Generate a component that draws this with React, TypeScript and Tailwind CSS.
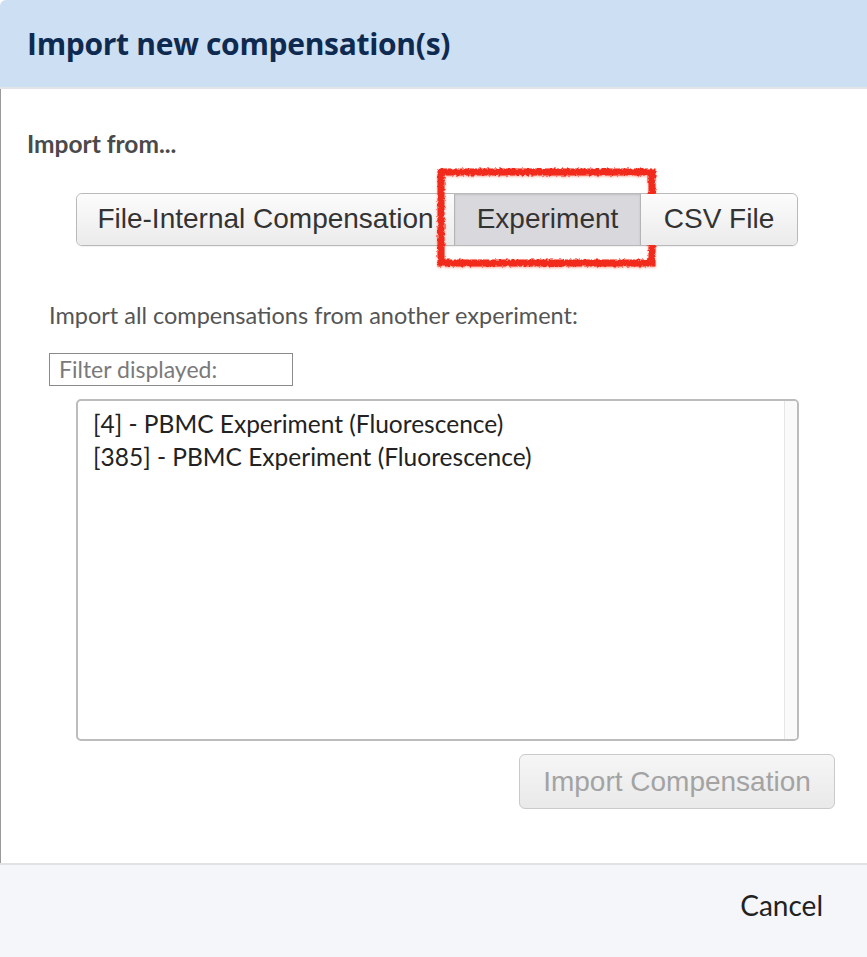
import { useState } from "react";

const experiments = [
  "[4] - PBMC Experiment (Fluorescence)",
  "[385] - PBMC Experiment (Fluorescence)",
];

const sources = [
  { label: "File-Internal Compensation", width: "w-[377px] rounded-l-[6px]" },
  { label: "Experiment", width: "w-[187px] border-x border-[#b4b4b4]" },
  { label: "CSV File", width: "w-[156px] rounded-r-[6px]" },
] as const;

export default function App() {
  const [source, setSource] = useState("Experiment");
  const [filter, setFilter] = useState("");

  const shown = experiments.filter((e) => e.toLowerCase().includes(filter.toLowerCase()));

  return (
    <div className="flex h-[957px] w-[867px] flex-col overflow-hidden bg-white font-['Lato',sans-serif]">
      <header className="flex h-[89px] flex-none items-center rounded-tl-[6px] border-b-2 border-[#e2e4e8] bg-[#cddff2] px-[27px]">
        <h1 className="font-['Open_Sans',sans-serif] text-[30px] font-bold tracking-[-0.01em] text-[#0f2a50]">
          Import new compensation(s)
        </h1>
      </header>

      <main className="flex flex-1 flex-col border-l border-[#9a9a9a]">
        <div className="px-[26px] pt-[37px] text-[24.5px] font-bold text-[#4a4a4a]">Import from...</div>

        <div className="flex pl-[75px] pt-[30px]">
          <div className="flex h-[53px] rounded-[6px] border border-[#b9b9b9] font-['Liberation_Sans',Arial,sans-serif] text-[28px] text-[#333] shadow-[0_1px_1px_rgba(0,0,0,.06)]">
            {sources.map((s) => (
              <button
                key={s.label}
                onClick={() => setSource(s.label)}
                className={
                  (source === s.label
                    ? "bg-[#d9d8dc] shadow-[inset_0_1px_2px_rgba(0,0,0,.12)] "
                    : "bg-gradient-to-b from-[#fcfcfc] to-[#ebebeb] ") +
                  s.width +
                  " relative h-full whitespace-nowrap text-center"
                }
              >
                {s.label}
                {s.label === "Experiment" && (
                  <svg
                    className="pointer-events-none absolute -left-[18px] -top-[26px] overflow-visible"
                    width="219"
                    height="99"
                    viewBox="0 0 219 99"
                  >
                    <defs>
                      <filter id="rough" x="-10%" y="-10%" width="120%" height="120%">
                        <feTurbulence type="fractalNoise" baseFrequency="0.4" numOctaves="2" seed="4" />
                        <feDisplacementMap in="SourceGraphic" scale="4" />
                        <feDropShadow dx="0" dy="1" stdDeviation="1.2" floodColor="#f2291c" floodOpacity="0.45" />
                      </filter>
                    </defs>
                    <rect
                      x="4"
                      y="4"
                      width="211"
                      height="91"
                      fill="none"
                      stroke="#f2291c"
                      strokeWidth="7"
                      filter="url(#rough)"
                    />
                  </svg>
                )}
              </button>
            ))}
          </div>
        </div>

        <div className="px-[48px] pt-[52px] text-[23.5px] text-[#555]">
          Import all compensations from another experiment:
        </div>

        <div className="px-[48px] pt-[20px]">
          <input
            value={filter}
            onChange={(e) => setFilter(e.target.value)}
            placeholder="Filter displayed:"
            className="h-[33px] w-[244px] border border-[#8a8a8a] px-[9px] text-[23px] text-[#333] outline-none placeholder:text-[#7a7a7a]"
          />
        </div>

        <div className="pl-[75px] pr-[68px] pt-[13px]">
          <div className="flex h-[342px] overflow-hidden rounded-[5px] border-2 border-[#bcbcbc]">
            <ul className="flex-1 pl-[15px] pt-[6px] text-[24.5px] leading-[33px] text-[#222]">
              {shown.map((e) => (
                <li key={e}>{e}</li>
              ))}
            </ul>
            <div className="w-[13px] border-l border-[#e6e6e6] bg-[#fafafa]" />
          </div>
        </div>

        <div className="flex justify-end pr-[32px] pt-[13px]">
          <button
            disabled
            className="h-[55px] w-[316px] rounded-[6px] border border-[#cacaca] bg-gradient-to-b from-[#f6f6f6] to-[#e9e9e9] font-['Liberation_Sans',Arial,sans-serif] text-[28px] text-[#a3a3a3]"
          >
            Import Compensation
          </button>
        </div>
      </main>

      <footer className="flex h-[94px] flex-none items-center justify-end border-t-2 border-[#e2e2e4] bg-[#f5f6fa] pb-[12px] pr-[44px]">
        <button className="text-[28px] text-[#222]">Cancel</button>
      </footer>
    </div>
  );
}
